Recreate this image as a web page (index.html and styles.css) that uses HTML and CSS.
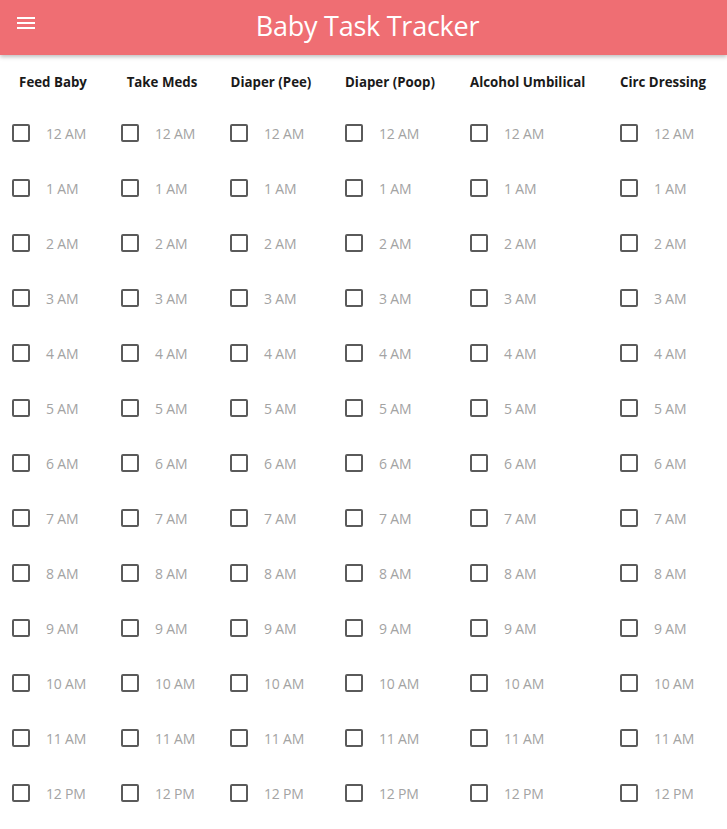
FILE: index.html
```html
<!DOCTYPE html>
<html>
<head>
<meta charset="utf-8">
<title>Baby Task Tracker</title>
<link rel="stylesheet" href="styles.css">
</head>
<body>
<header class="appbar">
  <button class="menu-btn" aria-label="Menu">
    <svg width="18" height="12" viewBox="0 0 18 12"><rect x="0" y="0" width="18" height="2" fill="#fff"/><rect x="0" y="5" width="18" height="2" fill="#fff"/><rect x="0" y="10" width="18" height="2" fill="#fff"/></svg>
  </button>
  <h1 class="title">Baby Task Tracker</h1>
</header>
<main class="grid" id="grid"></main>
<script src="app.js"></script>
</body>
</html>
```

FILE: styles.css
```css
* { box-sizing: border-box; }
html, body { margin: 0; padding: 0; background: #fff; }
body { font-family: "Open Sans", "Noto Sans", Arial, sans-serif; overflow: hidden; }

.appbar {
  height: 55px;
  background: #ef6e73;
  display: flex;
  align-items: center;
  justify-content: center;
  position: relative;
  box-shadow: 0 2px 4px rgba(0,0,0,0.25);
  z-index: 1;
}
.menu-btn {
  position: absolute;
  left: 17px;
  top: 17px;
  padding: 0;
  border: 0;
  background: none;
  width: 18px;
  height: 12px;
  display: block;
}
.menu-btn svg { display: block; }
.title {
  margin: 0;
  color: #fff;
  font-weight: 400;
  font-size: 27px;
  letter-spacing: -0.25px;
  line-height: 50px;
  position: relative;
  left: 4px;
  top: -2px;
}

.grid {
  display: grid;
  grid-template-columns: 109px 109px 115px 125px 150px 1fr;
  padding-left: 12px;
}
.col {
  display: flex;
  flex-direction: column;
  width: max-content;
}
.col-head {
  height: 51px;
  display: flex;
  align-items: center;
  justify-content: center;
  font-weight: 700;
  font-size: 13.3px;
  color: #1a1a1a;
  padding-top: 3px;
}
.cell {
  height: 55px;
  display: flex;
  align-items: center;
  min-width: 82px;
}
.box {
  width: 18px;
  height: 18px;
  border: 2px solid #5a5a5a;
  border-radius: 2px;
  flex: none;
  margin-top: -1px;
}
.time {
  margin-left: 16px;
  font-size: 14px;
  color: #a3a3a3;
  letter-spacing: -0.2px;
}
```

FILE: app.js
```js
var tasks = ["Feed Baby", "Take Meds", "Diaper (Pee)", "Diaper (Poop)", "Alcohol Umbilical", "Circ Dressing"];
var times = ["12 AM","1 AM","2 AM","3 AM","4 AM","5 AM","6 AM","7 AM","8 AM","9 AM","10 AM","11 AM","12 PM"];
var grid = document.getElementById("grid");
tasks.forEach(function (t) {
  var col = document.createElement("section");
  col.className = "col";
  var h = document.createElement("div");
  h.className = "col-head";
  h.textContent = t;
  col.appendChild(h);
  times.forEach(function (tm) {
    var c = document.createElement("label");
    c.className = "cell";
    var b = document.createElement("span");
    b.className = "box";
    var s = document.createElement("span");
    s.className = "time";
    s.textContent = tm;
    c.appendChild(b);
    c.appendChild(s);
    col.appendChild(c);
  });
  grid.appendChild(col);
});
```
